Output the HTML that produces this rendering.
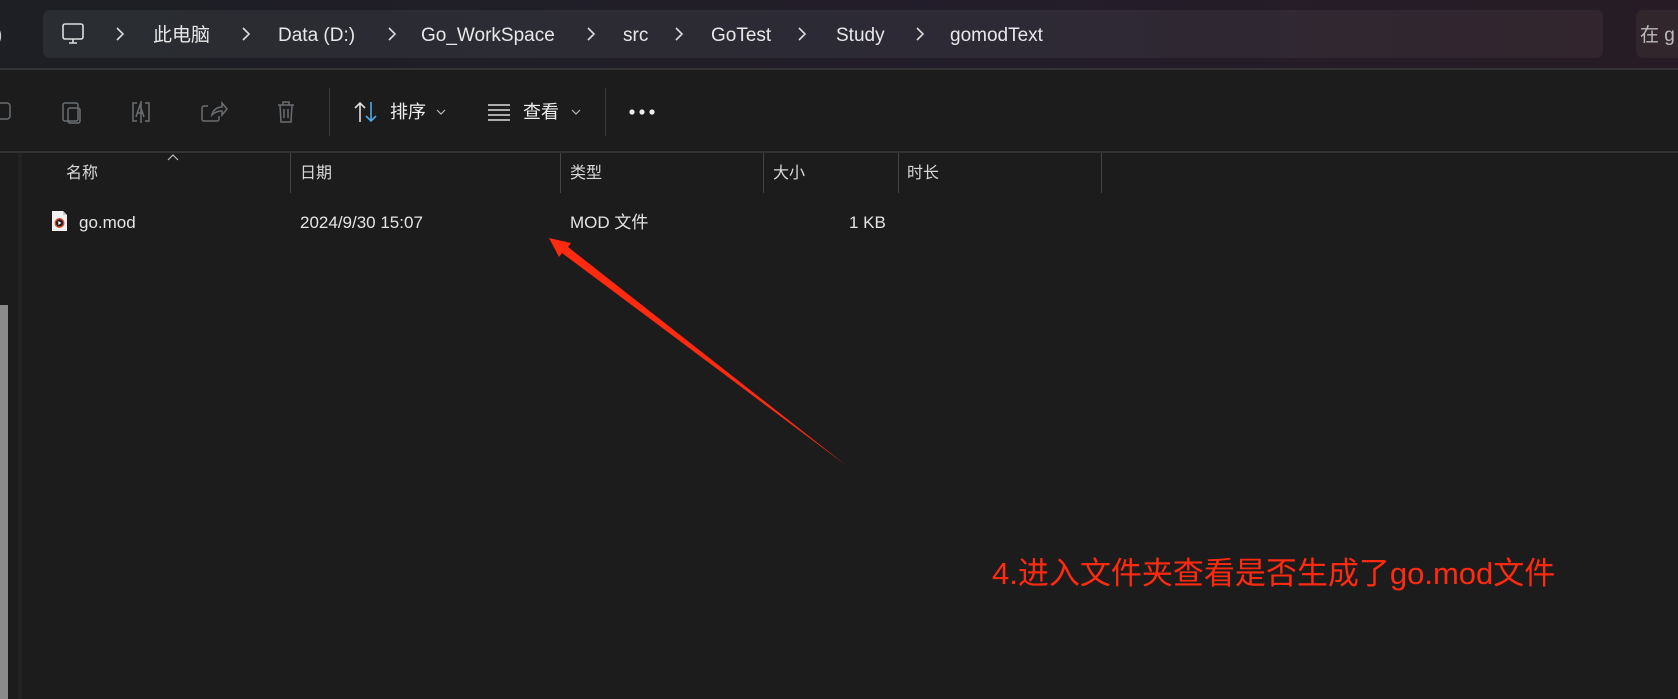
<!DOCTYPE html>
<html><head><meta charset="utf-8"><style>
*{margin:0;padding:0;box-sizing:border-box}
body{width:1678px;height:699px;overflow:hidden;background:#1c1c1c;font-family:"Liberation Sans","Noto Sans CJK SC",sans-serif;color:#e6e6e6;position:relative}
.top{position:absolute;left:0;top:0;width:1678px;height:68px;background:linear-gradient(90deg,#1d1f24,#231d2a 60%,#271c25)}
.bc{position:absolute;left:43px;top:10px;width:1560px;height:48px;border-radius:7px;background:linear-gradient(90deg,#2a2d31,#2d2a36 60%,#32252d)}
.sb{position:absolute;left:1636px;top:10px;width:60px;height:48px;border-radius:7px;background:#30262c}
.t{position:absolute;white-space:nowrap}
.l{position:absolute;white-space:nowrap;height:30px;line-height:30px;display:flex;align-items:center}
.bt{font-size:19px;top:21px;color:#e8e8e8}
.line{position:absolute;background:#3a3a3a}
.tb{font-size:18px;top:97px;color:#eee}
.hd{font-size:16px;top:159px;color:#d8d8d8}
.sep{position:absolute;top:153px;width:1px;height:40px;background:#444}
.row{font-size:17px;top:208px;color:#e4e4e4}
</style></head><body>
<div class="top"></div>
<div class="bc"></div>
<div class="sb"></div>
<div class="l" style="left:-4px;top:21px;font-size:19px;color:#ccc">)</div>
<svg class="t" style="left:61px;top:22px" width="24" height="24" viewBox="0 0 24 24" fill="none" stroke="#ddd" stroke-width="1.6"><rect x="2" y="2" width="20" height="15" rx="2"/><path d="M8 21h8M12 17v4"/></svg>
<svg class="t" style="left:0;top:0" width="1000" height="60" fill="none" stroke="#ddd" stroke-width="1.6">
<path d="M117 28l6 6-6 6M243 28l6 6-6 6M389 28l6 6-6 6M588 28l6 6-6 6M676 28l6 6-6 6M799 28l6 6-6 6M917 28l6 6-6 6"/></svg>
<div class="l bt" style="left:153px">此电脑</div>
<div class="l bt" style="left:278px">Data (D:)</div>
<div class="l bt" style="left:421px">Go_WorkSpace</div>
<div class="l bt" style="left:623px">src</div>
<div class="l bt" style="left:711px">GoTest</div>
<div class="l bt" style="left:836px">Study</div>
<div class="l bt" style="left:950px">gomodText</div>
<div class="l bt" style="left:1640px;color:#bbb">在 g</div>
<div class="line" style="left:0;top:68px;width:1678px;height:2px;background:#333"></div>
<svg class="t" style="left:0;top:99px" width="300" height="26" viewBox="0 0 300 26" fill="none" stroke="#6a6e72" stroke-width="1.5">
<rect x="-6" y="4" width="16" height="16" rx="3"/>
<rect x="63" y="4" width="15" height="18" rx="2"/><rect x="68" y="9" width="12" height="15" rx="2"/>
<path d="M137 4h-4v18h4M145 4h4v18h-4M141 2v22M136 18l4-12 4 12M137 14h6"/>
<path d="M208 7h-4a2 2 0 0 0-2 2v11a2 2 0 0 0 2 2h13a2 2 0 0 0 2-2v-3M212 16c1-5 5-8 10-8v-4l5 6-5 6v-4c-4 0-7 1-10 4z"/>
<path d="M278 6h16M283 6V3h6v3M280 6l1 17h10l1-17M284 10v9M288 10v9"/>
</svg>
<div class="line" style="left:329px;top:88px;width:1px;height:48px;background:#3a3a3a"></div>
<svg class="t" style="left:353px;top:100px" width="26" height="24" viewBox="0 0 26 24" fill="none" stroke-width="1.6"><path d="M7 22V3M2 8l5-5 5 5" stroke="#ddd"/><path d="M18 2v19M13 16l5 5 5-5" stroke="#4ba8e8"/></svg>
<div class="l tb" style="left:390px">排序</div>
<svg class="t" style="left:436px;top:108px" width="10" height="8" fill="none" stroke="#bbb" stroke-width="1.2"><path d="M1 2l4 4 4-4"/></svg>
<svg class="t" style="left:487px;top:103px" width="24" height="18" viewBox="0 0 24 18" stroke="#ddd" stroke-width="1.6"><path d="M1 2h22M1 7h22M1 12h22M1 17h22"/></svg>
<div class="l tb" style="left:523px">查看</div>
<svg class="t" style="left:571px;top:108px" width="10" height="8" fill="none" stroke="#bbb" stroke-width="1.2"><path d="M1 2l4 4 4-4"/></svg>
<div class="line" style="left:605px;top:88px;width:1px;height:48px;background:#3a3a3a"></div>
<svg class="t" style="left:628px;top:108px" width="30" height="8"><circle cx="4" cy="4" r="2.6" fill="#eee"/><circle cx="14" cy="4" r="2.6" fill="#eee"/><circle cx="24" cy="4" r="2.6" fill="#eee"/></svg>
<div class="line" style="left:0;top:151px;width:1678px;height:2px;background:#333"></div>
<div class="line" style="left:18px;top:153px;width:4px;height:546px;background:#222"></div>
<div class="line" style="left:0;top:305px;width:8px;height:394px;background:#8b8b8b"></div>
<svg class="t" style="left:167px;top:154px" width="12" height="8" fill="none" stroke="#bbb" stroke-width="1.2"><path d="M1 6l5-5 5 5"/></svg>
<div class="l hd" style="left:66px">名称</div>
<div class="sep" style="left:290px"></div>
<div class="l hd" style="left:300px">日期</div>
<div class="sep" style="left:560px"></div>
<div class="l hd" style="left:570px">类型</div>
<div class="sep" style="left:763px"></div>
<div class="l hd" style="left:773px">大小</div>
<div class="sep" style="left:898px"></div>
<div class="l hd" style="left:907px">时长</div>
<div class="sep" style="left:1101px"></div>
<svg class="t" style="left:51px;top:210px" width="17" height="22" viewBox="0 0 17 22"><path d="M1 1h11l4 4v16H1z" fill="#f2f2f2"/><path d="M12 1v4h4" fill="#ccc"/><circle cx="8.5" cy="13" r="5" fill="#e04a2a"/><circle cx="8.5" cy="13" r="3.6" fill="#222"/><path d="M7.3 11v4l3-2z" fill="#fff"/></svg>
<div class="l row" style="left:79px">go.mod</div>
<div class="l row" style="left:300px">2024/9/30 15:07</div>
<div class="l row" style="left:570px">MOD 文件</div>
<div class="l row" style="left:849px">1 KB</div>
<svg class="t" style="left:0;top:0" width="1678" height="699"><polygon points="549,238 571,243 568,247 847,466 562,253 559,257" fill="#ff2a10"/></svg>
<div class="l" style="left:992px;top:557px;height:34px;font-size:31px;color:#ff2a10">4.进入文件夹查看是否生成了go.mod文件</div>
</body></html>
